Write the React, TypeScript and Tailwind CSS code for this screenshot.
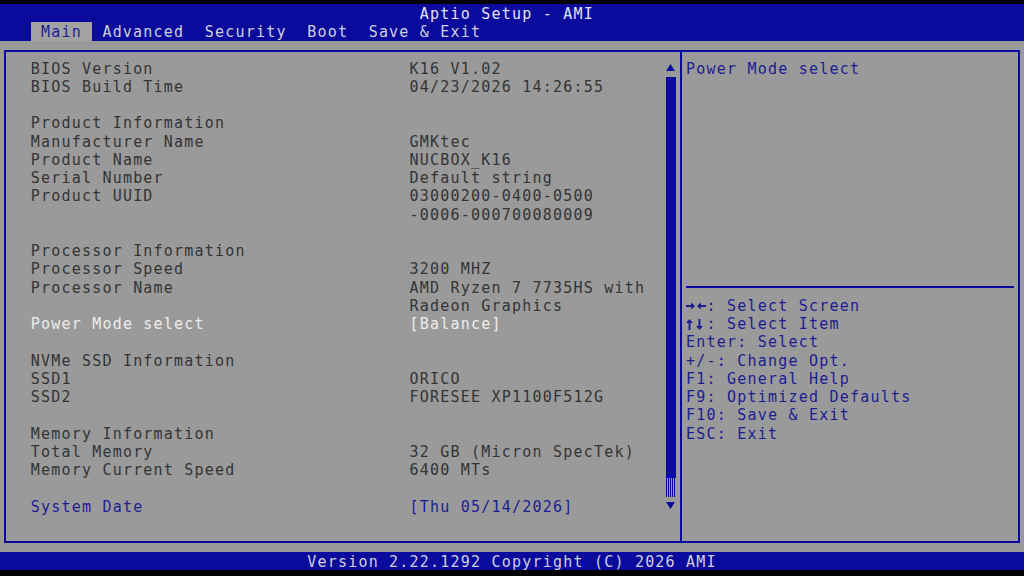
import React from 'react'

// one character cell of the BIOS text grid: 10.24px wide, 18.25px tall
type Row = { label?: string; value?: string; tone?: 'normal' | 'white' | 'blue' }

const rows: Row[] = [
  { label: 'BIOS Version', value: 'K16 V1.02' },
  { label: 'BIOS Build Time', value: '04/23/2026 14:26:55' },
  {},
  { label: 'Product Information' },
  { label: 'Manufacturer Name', value: 'GMKtec' },
  { label: 'Product Name', value: 'NUCBOX_K16' },
  { label: 'Serial Number', value: 'Default string' },
  { label: 'Product UUID', value: '03000200-0400-0500' },
  { value: '-0006-000700080009' },
  {},
  { label: 'Processor Information' },
  { label: 'Processor Speed', value: '3200 MHZ' },
  { label: 'Processor Name', value: 'AMD Ryzen 7 7735HS with' },
  { value: 'Radeon Graphics' },
  { label: 'Power Mode select', value: '[Balance]', tone: 'white' },
  {},
  { label: 'NVMe SSD Information' },
  { label: 'SSD1', value: 'ORICO' },
  { label: 'SSD2', value: 'FORESEE XP1100F512G' },
  {},
  { label: 'Memory Information' },
  { label: 'Total Memory', value: '32 GB (Micron SpecTek)' },
  { label: 'Memory Current Speed', value: '6400 MTs' },
  {},
  { label: 'System Date', value: '[Thu 05/14/2026]', tone: 'blue' },
]

const help: { key: string; text: string; arrows?: 'lr' | 'ud' }[] = [
  { key: '→←', text: ': Select Screen', arrows: 'lr' },
  { key: '↑↓', text: ': Select Item', arrows: 'ud' },
  { key: 'Enter', text: ': Select' },
  { key: '+/-', text: ': Change Opt.' },
  { key: 'F1', text: ': General Help' },
  { key: 'F9', text: ': Optimized Defaults' },
  { key: 'F10', text: ': Save & Exit' },
  { key: 'ESC', text: ': Exit' },
]

const tabs = ['Main', 'Advanced', 'Security', 'Boot', 'Save & Exit']

function toneClass(tone?: Row['tone']) {
  if (tone === 'white') return 'text-[#ececec]'
  if (tone === 'blue') return 'text-[#1d1d92]'
  return 'text-[#343434]'
}

// bitmap-style arrow pair glyphs from the key legend
function ArrowPair({ kind }: { kind: 'lr' | 'ud' }) {
  return (
    <span className="w-[20.48px] flex items-center">
      {kind === 'lr' ? (
        <svg width="20" height="8" viewBox="0 0 20 8" fill="#1d1d92">
          <rect x="0" y="3" width="6" height="2" />
          <path d="M5 0.5 L9 4 L5 7.5 Z" />
          <rect x="14" y="3" width="6" height="2" />
          <path d="M15 0.5 L11 4 L15 7.5 Z" />
        </svg>
      ) : (
        <svg width="20" height="11" viewBox="0 0 20 11" fill="#1d1d92">
          <path d="M3.5 0 L7 4 L0 4 Z" />
          <rect x="2.5" y="3.5" width="2" height="7.5" />
          <path d="M13.5 11 L17 7 L10 7 Z" />
          <rect x="12.5" y="0" width="2" height="7.5" />
        </svg>
      )}
    </span>
  )
}

function ScrollBar() {
  return (
    <div className="w-[10.24px] pt-[6.85px] flex flex-col">
      <div className="h-[18.25px] flex items-center justify-center">
        <svg width="9" height="7" viewBox="0 0 9 7">
          <path d="M4.5 0 L9 7 L0 7 Z" fill="#0a0a9c" />
        </svg>
      </div>
      <div className="h-[401.5px] bg-[#0a0a9c]" />
      <div className="h-[18.25px] bg-[repeating-linear-gradient(90deg,#0a0a9c_0px,#0a0a9c_1px,transparent_1px,transparent_2px)]" />
      <div className="h-[18.25px] flex items-center justify-center">
        <svg width="9" height="7" viewBox="0 0 9 7">
          <path d="M0 0 L9 0 L4.5 7 Z" fill="#0a0a9c" />
        </svg>
      </div>
    </div>
  )
}

export default function App() {
  return (
    <div className="w-[1024px] h-[576px] bg-black pt-[4px] overflow-hidden font-['DejaVu_Sans_Mono','Liberation_Mono',monospace] text-[15px] tracking-[1.21px] leading-[18.25px]">
      {/* header */}
      <div className="h-[36.5px] bg-[#0a0a9c]">
        <div className="h-[18.25px] pt-[1px] pl-[419.84px] text-[#e2e2ee]">Aptio Setup - AMI</div>
        <div className="h-[18.25px] flex pl-[30.72px]">
          {tabs.map((t, i) => (
            <div
              key={t}
              className={
                i === 0
                  ? 'px-[10.24px] pt-[1px] bg-[#a2a2a2] text-[#1d1d92]'
                  : 'px-[10.24px] pt-[1px] text-[#cfcfdc]'
              }
            >
              {t}
            </div>
          ))}
        </div>
      </div>

      {/* body */}
      <div className="h-[511px] bg-[#9a9a9a] pt-[9.4px] px-[4px]">
        <div className="h-[493px] border-2 border-[#0a0a9c] flex">
          <div className="w-[674px] flex">
            <div className="w-[659.6px] pt-[7.85px] pl-[24.72px]">
              {rows.map((r, i) => (
                <div key={i} className={`h-[18.25px] flex whitespace-pre ${toneClass(r.tone)}`}>
                  <div className="w-[378.88px]">{r.label ?? ''}</div>
                  <div>{r.value ?? ''}</div>
                </div>
              ))}
            </div>
            <ScrollBar />
          </div>

          <div className="flex-1 border-l-2 border-[#0a0a9c] pt-[7.85px] pl-[4.08px] pr-[4px] text-[#1d1d92]">
            <div className="h-[18.25px]">Power Mode select</div>
            <div className="h-[199.75px]" />
            <div className="h-[18.25px] flex items-center">
              <div className="w-full h-[2px] bg-[#0a0a9c]" />
            </div>
            <div className="pt-[1px]">
              {help.map((h) => (
                <div key={h.key} className="h-[18.25px] flex whitespace-pre">
                  {h.arrows ? <ArrowPair kind={h.arrows} /> : <span>{h.key}</span>}
                  <span>{h.text}</span>
                </div>
              ))}
            </div>
          </div>
        </div>
      </div>

      {/* footer */}
      <div className="h-[18.25px] pt-[1px] bg-[#0a0a9c] text-[#cfcfdc] pl-[307.2px] whitespace-pre">
        Version 2.22.1292 Copyright (C) 2026 AMI
      </div>
    </div>
  )
}
